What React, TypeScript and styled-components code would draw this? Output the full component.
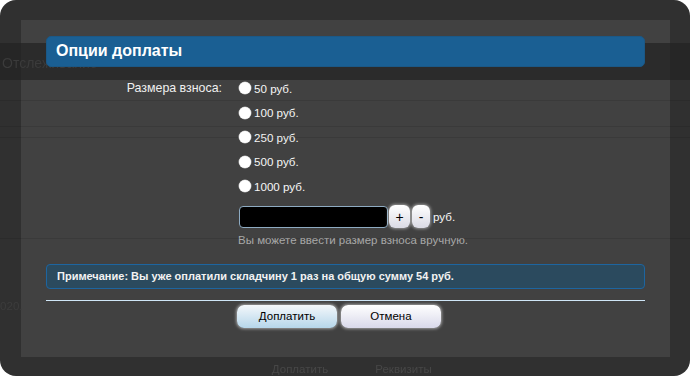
import React from "react";
import styled, { createGlobalStyle } from "styled-components";

const GlobalStyle = createGlobalStyle`
  html, body { margin: 0; padding: 0; background: #ffffff; }
  body {
    font-family: "Liberation Sans", Arial, sans-serif;
    width: 690px;
    height: 376px;
    overflow: hidden;
  }
  * { box-sizing: border-box; }
`;

const Overlay = styled.div`
  position: fixed;
  inset: 0;
  border-radius: 16px;
  background: #303030;
  padding: 20px 20px 19px 21px;
  display: flex;
  overflow: hidden;
`;

/* faint remnants of the page behind, showing through the modal */
const Ghost = styled.div`
  position: absolute;
  inset: 0;
  z-index: 1;
  pointer-events: none;
  display: flex;
  flex-direction: column;
`;

const GhostBand = styled.div`
  margin-top: 43px;
  height: 37px;
  background: rgba(34, 34, 34, 0.69);
  display: flex;
  align-items: center;
  padding: 3px 0 0 2px;
  font-size: 14px;
  color: #3b3b3b;
  white-space: nowrap;
`;

const GhostLine = styled.div<{ $top: number }>`
  margin-top: ${(p) => p.$top}px;
  height: 1px;
  background: rgba(0, 0, 0, 0.1);
`;

const GhostText = styled.div<{ $top: number }>`
  margin-top: ${(p) => p.$top}px;
  height: 14px;
  line-height: 14px;
  font-size: 11.6px;
  color: #3c3c3c;
  white-space: nowrap;
`;

const GhostButtons = styled.div`
  margin-top: 49px;
  display: flex;
  gap: 3.5px;
  padding-left: 250px;
  height: 14px;
  line-height: 14px;
`;

const GhostButton = styled.div`
  width: 100px;
  text-align: center;
  font-size: 11.5px;
  color: #474747;
`;

const Panel = styled.div`
  flex: 1;
  background: #414141;
  padding: 16px 25px 0;
  display: flex;
  flex-direction: column;
`;

const TitleBar = styled.div`
  position: relative;
  z-index: 2;
  height: 31px;
  border-radius: 5px;
  background: #1a5f93;
  border: 1px solid #1b5886;
  display: flex;
  align-items: center;
  padding: 0 0 2px 9px;
  color: #ffffff;
  font-weight: bold;
  font-size: 16px;
`;

const Form = styled.div`
  display: grid;
  grid-template-columns: 176px 1fr;
  column-gap: 17px;
  margin-top: 9px;
`;

const FieldLabel = styled.div`
  height: 24.5px;
  display: flex;
  align-items: center;
  justify-content: flex-end;
  font-size: 12.4px;
  color: #f0f0f0;
`;

const Options = styled.div`
  display: flex;
  flex-direction: column;
`;

const OptionRow = styled.label`
  height: 24.5px;
  display: flex;
  align-items: center;
  gap: 3px;
  font-size: 11.6px;
  color: #f6f6f6;
`;

const Radio = styled.input`
  position: relative;
  z-index: 2;
  appearance: none;
  margin: 0;
  width: 12px;
  height: 12px;
  border-radius: 50%;
  background: #ffffff;
  box-shadow: 0 0 0 0.5px #b8b8b8;
`;

const CustomRow = styled.div`
  margin-top: 6px;
  height: 24px;
  display: flex;
  align-items: center;
  font-size: 11.6px;
  color: #f6f6f6;
`;

const AmountInput = styled.input`
  width: 149px;
  height: 22px;
  margin: 0 1px 0 0;
  background: #000000;
  border: 1px solid #8eabc2;
  border-radius: 4px;
  color: #ffffff;
  outline: none;
`;

const StepButton = styled.button<{ $width: number }>`
  width: ${(p) => p.$width}px;
  height: 23px;
  margin-right: 2px;
  padding: 0;
  border: none;
  border-radius: 6px;
  background: linear-gradient(#ffffff, #dadae4);
  box-shadow: 0 0 3px 1px rgba(255, 255, 255, 0.45);
  font-family: inherit;
  font-size: 14px;
  color: #000000;
`;

const Unit = styled.span`
  margin-left: 1px;
`;

const Hint = styled.div`
  margin-top: 5px;
  margin-left: -1px;
  height: 13px;
  line-height: 13px;
  font-size: 11.5px;
  color: #a9a9a9;
  white-space: nowrap;
`;

const Note = styled.div`
  margin-top: 17px;
  height: 25px;
  border: 1px solid #1d65a0;
  border-radius: 4px;
  background: #2b4a5e;
  display: flex;
  align-items: center;
  padding-left: 10px;
  font-size: 11px;
  font-weight: bold;
  color: #f2f2f2;
`;

const Separator = styled.div`
  margin-top: 11px;
  height: 1px;
  background: #cfe6f7;
`;

const Actions = styled.div`
  margin-top: 4px;
  display: flex;
  justify-content: center;
  gap: 4px;
  padding-right: 13px;
`;

const ActionButton = styled.button<{ $primary?: boolean }>`
  width: 100px;
  height: 23px;
  padding: 0;
  border: none;
  border-radius: 7px;
  background: ${(p) =>
    p.$primary
      ? "linear-gradient(#f4f8fb, #b6d6ea)"
      : "linear-gradient(#ffffff, #d9d9ea)"};
  box-shadow: 0 0 3px 1px rgba(255, 255, 255, 0.5);
  font-family: inherit;
  font-size: 11.5px;
  color: #000000;
`;

const amounts = [50, 100, 250, 500, 1000];

export default function App() {
  return (
    <>
      <GlobalStyle />
      <Overlay>
        <Panel>
          <TitleBar>Опции доплаты</TitleBar>
          <Form>
            <FieldLabel>Размера взноса:</FieldLabel>
            <Options>
              {amounts.map((a) => (
                <OptionRow key={a}>
                  <Radio type="radio" name="amount" value={a} />
                  {a} руб.
                </OptionRow>
              ))}
              <CustomRow>
                <AmountInput type="text" />
                <StepButton $width={21}>+</StepButton>
                <StepButton $width={18}>-</StepButton>
                <Unit>руб.</Unit>
              </CustomRow>
              <Hint>Вы можете ввести размер взноса вручную.</Hint>
            </Options>
          </Form>
          <Note>Примечание: Вы уже оплатили складчину 1 раз на общую сумму 54 руб.</Note>
          <Separator />
          <Actions>
            <ActionButton $primary>Доплатить</ActionButton>
            <ActionButton>Отмена</ActionButton>
          </Actions>
        </Panel>
        <Ghost>
          <GhostBand>Отслеживание</GhostBand>
          <GhostLine $top={20} />
          <GhostLine $top={25} />
          <GhostLine $top={10} />
          <GhostLine $top={100} />
          <GhostText $top={60}>020.</GhostText>
          <GhostButtons>
            <GhostButton>Доплатить</GhostButton>
            <GhostButton>Реквизиты</GhostButton>
          </GhostButtons>
        </Ghost>
      </Overlay>
    </>
  );
}
